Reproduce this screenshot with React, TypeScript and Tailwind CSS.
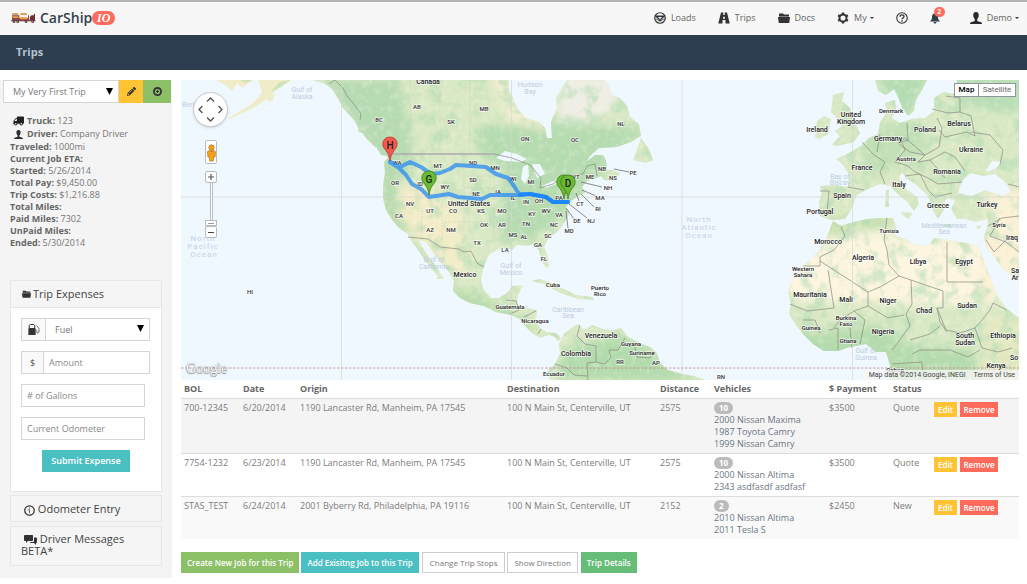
import { useState } from "react";
import type { ReactNode } from "react";
import {
  FaChevronDown,
  FaChevronLeft,
  FaChevronRight,
  FaChevronUp,
  FaPencilAlt,
  FaTruck,
} from "react-icons/fa";

type Job = {
  bol: string;
  date: string;
  origin: string;
  destination: string;
  distance: string;
  count: string;
  vehicles: string[];
  payment: string;
  status: string;
  rowClass: string;
};

const jobs: Job[] = [
  {
    bol: "700-12345",
    date: "6/20/2014",
    origin: "1190 Lancaster Rd, Manheim, PA 17545",
    destination: "100 N Main St, Centerville, UT",
    distance: "2575",
    count: "10",
    vehicles: ["2000 Nissan Maxima", "1987 Toyota Camry", "1999 Nissan Camry"],
    payment: "$3500",
    status: "Quote",
    rowClass: "bg-[#f4f4f4]",
  },
  {
    bol: "7754-1232",
    date: "6/23/2014",
    origin: "1190 Lancaster Rd, Manheim, PA 17545",
    destination: "100 N Main St, Centerville, UT",
    distance: "2575",
    count: "10",
    vehicles: ["2000 Nissan Altima", "2343 asdfasdf asdfasf"],
    payment: "$3500",
    status: "Quote",
    rowClass: "bg-white",
  },
  {
    bol: "STAS_TEST",
    date: "6/24/2014",
    origin: "2001 Byberry Rd, Philadelphia, PA 19116",
    destination: "100 N Main St, Centerville, UT",
    distance: "2152",
    count: "2",
    vehicles: ["2010 Nissan Altima", "2011 Tesla S"],
    payment: "$2450",
    status: "New",
    rowClass: "bg-[#f9f9f9]",
  },
];

const tripFacts = [
  ["Traveled:", "1000mi"],
  ["Current Job ETA:", ""],
  ["Started:", "5/26/2014"],
  ["Total Pay:", "$9,450.00"],
  ["Trip Costs:", "$1,216.88"],
  ["Total Miles:", ""],
  ["Paid Miles:", "7302"],
  ["UnPaid Miles:", ""],
  ["Ended:", "5/30/2014"],
];

const columns = [
  { title: "BOL", width: "w-[59px]" },
  { title: "Date", width: "w-[57px]" },
  { title: "Origin", width: "w-[207px]" },
  { title: "Destination", width: "w-[153px]" },
  { title: "Distance", width: "w-[54px]" },
  { title: "Vehicles", width: "w-[115px]" },
  { title: "$ Payment", width: "w-[64px]" },
  { title: "Status", width: "w-[41px]" },
];

/* icons */

const WheelIC = () => (
  <svg viewBox="0 0 24 24" className="w-3 h-3" fill="none" stroke="#333" strokeWidth="2.4">
    <circle cx="12" cy="12" r="10.500" />
    <path d="M4 8.500h16L14 14v3h-4v-3z" strokeWidth="2.600" />
    <path d="M3 13l5 3M21 13l-5 3" strokeWidth="1.500" />
  </svg>
);

const RoadIC = () => (
  <svg viewBox="0 0 24 24" className="w-3 h-3" fill="#333">
    <path d="M6 1h4.500v5h3V1H18l5.500 22h-8.500v-7h-6v7H.5zM10.500 9.500l-.6 4h4.200l-.6-4z" />
  </svg>
);

const FolderIC = ({ className }: { className: string }) => (
  <svg viewBox="0 0 24 20" className={className} fill="#333">
    <path d="M2 1h8l2 2h10v3H2zM0 8h24l-1.500 12h-21z" />
    <path d="M2 5h20v4H2z" opacity="0.6" />
  </svg>
);

const GearIC = () => (
  <svg viewBox="0 0 24 24" className="w-3 h-3" fill="none" stroke="#333">
    <circle cx="12" cy="12" r="7" strokeWidth="3.800" />
    <path
      d="M12 .8v4M12 19.200v4M2.300 6.400l3.500 2M18.200 15.600l3.500 2M2.300 17.600l3.500-2M18.200 8.400l3.500-2"
      strokeWidth="4.600"
    />
  </svg>
);

const HelpIC = () => (
  <svg viewBox="0 0 24 24" className="w-3 h-3" fill="none" stroke="#333" strokeWidth="2.2">
    <circle cx="12" cy="12" r="10.500" />
    <path d="M8 9.500c0-5 8-5 8-.5 0 3-4 2.500-4 5.500M12 16.500v3" strokeWidth="2.600" />
  </svg>
);

const BellIC = () => (
  <svg viewBox="0 0 20 22" className="w-[10px] h-[11px]" fill="#333f4d">
    <path d="M10 1c5 0 6 4 6 8 0 4 2 5 4 8H0c2-3 4-4 4-8 0-4 1-8 6-8zM7 18h6c0 4-6 4-6 0z" />
  </svg>
);

const PersonIC = ({ className }: { className: string }) => (
  <svg viewBox="0 0 24 24" className={className} fill="#2b2b2b">
    <path d="M12 0c4.500 0 5.500 3 5.500 7 0 3-1.500 5.500-3 7v4l7.500 2.500c1.500.5 2 1.500 2 3.500H0c0-2 .5-3 2-3.500L9.500 18v-4c-1.500-1.500-3-4-3-7 0-4 1-7 5.500-7z" />
  </svg>
);

const PlusIC = () => (
  <svg viewBox="0 0 24 24" className="w-[9px] h-[9px]" fill="none" stroke="#333" strokeWidth="5">
    <circle cx="12" cy="12" r="9.500" />
    <path d="M12 8v8M8 12h8" strokeWidth="3" />
  </svg>
);

const PumpIC = () => (
  <svg viewBox="0 0 24 22" className="w-3 h-[11px]" fill="none" stroke="#333" strokeWidth="2">
    <path d="M1 21h14M2.500 20V4c0-2 1-3 2.500-3h6c1.500 0 2.500 1 2.500 3v16" />
    <path d="M2 9h12v12H2z" fill="#333" />
    <path d="M14 12c6-1 2 6 5 6s3-3 3-7c0-3-1-4-5-8" stroke="#666" />
  </svg>
);

const InfoIC = () => (
  <svg viewBox="0 0 24 24" className="w-[11px] h-[11px] inline" fill="none" stroke="#333">
    <circle cx="12" cy="12" r="10.300" strokeWidth="2.800" />
    <path d="M12 10v8M8 11l4-1M12 5v3" strokeWidth="2" stroke="#666" />
  </svg>
);

const ChatIC = () => (
  <svg viewBox="0 0 26 20" className="w-[13px] h-[10px] inline" fill="#333">
    <path d="M2 0h14c2 0 2 1 2 2v8c0 1-1 2-2 2H8l-4 4v-4H2c-1 0-2-1-2-2V2c0-1 1-2 2-2z" />
    <path d="M20 5h3c2 0 3 1 3 2v7c0 1-1 2-2 2v4l-4-4h-6l-3-2h6c2 0 3-1 3-3z" />
  </svg>
);

const LogoIC = () => (
  <svg viewBox="0 0 75 36" className="w-[25px] h-3">
    <path d="M3 10h22v9h26v-9h3v16H3z" fill="#8a4a45" />
    <path d="M5 3h15l3 6H3zM30 3h15l4 6H27z" fill="#d9a05a" />
    <path d="M4 13h18v5H4zM28 15h20v7H28z" fill="#f0a050" />
    <path d="M56 24c0-10 3-14 8-14h5v-5h3v21H56zM60 15h5v5h-6z" fill="#6e2f33" />
    <path d="M1 24h72v4H1z" fill="#7b4a4c" />
    <g fill="#5a2b2e">
      <circle cx="9" cy="29" r="4" />
      <circle cx="20" cy="29" r="4" />
      <circle cx="45" cy="29" r="4" />
      <circle cx="65" cy="29" r="4" />
    </g>
    <g fill="#e6dcdc">
      <circle cx="9" cy="29" r="1.500" />
      <circle cx="20" cy="29" r="1.500" />
      <circle cx="45" cy="29" r="1.500" />
      <circle cx="65" cy="29" r="1.500" />
    </g>
  </svg>
);

const Caret = () => (
  <svg viewBox="0 0 8 4" className="w-1 h-[2px] shrink-0" fill="#333">
    <path d="M0 0h8L4 4z" />
  </svg>
);

const SelectArrow = ({ className }: { className: string }) => (
  <svg viewBox="0 0 8 8" className={`absolute w-[7px] h-[7px] pointer-events-none ${className}`}>
    <path d="M0 0h8L4 8z" fill="#000" />
  </svg>
);

/* map */

const NORTH_AMERICA =
  "M313 80 325 84 332 89 337 97 343 108 352 118 359 128 366 138 374 146 384 151 388 158 384 162 385 172 383 186 383 198 386 210 392 220 400 229 407 233 412 242 419 251 426 262 433 270 438 277 436 279 444 279 433 262 424 250 419 240 426 242 434 254 442 264 449 272 454 281 453 291 460 298 470 303 484 306 496 312 511 315 520 319 526 327 532 333 540 338 549 335 555 337 558 342 561 338 556 333 546 332 540 328 536 321 537 310 522 307 517 304 518 296 523 285 512 286 507 293 499 298 491 298 484 290 481 281 483 270 485 263 490 254 498 249 505 248 512 250 517 245 526 246 533 244 539 250 541 259 546 268 549 266 548 256 544 247 548 239 558 231 565 222 569 214 566 207 571 201 578 196 585 193 582 187 587 181 594 179 601 176 604 180 610 181 620 174 613 170 607 170 606 161 603 155 595 155 586 162 590 156 599 148 617 147 631 142 641 136 639 124 630 117 627 106 620 98 612 95 609 86 605 80H567L562 88 556 98 557 108 551 122 552 138 547 138 545 128 539 122 526 118 518 110 513 98 509 90 509 80Z";

const SOUTH_AMERICA =
  "M550 380 548 371 555 364 560 354 559 344 564 334 571 328 578 324 584 330 592 325 603 329 613 330 621 328 628 337 640 343 650 347 657 353 660 363 668 370 682 374 694 376 705 380Z";

const AFRICA =
  "M833 221 841 226 854 222 867 219 879 218 893 218 896 226 894 235 905 239 916 245 928 246 934 238 949 240 966 243 978 246 983 259 990 277 997 295 1006 308 1019 318V380H889L890 365 886 352 876 352 866 344 850 347 838 351 824 351 813 344 803 334 795 324 789 314 791 303 788 291 794 277 803 266 812 258 821 248 827 237Z";

const EURASIA =
  "M957 80H1019V280L1012 275 1002 268 994 256 987 248 984 238 987 226 988 219 976 222 966 219 957 219 951 209 955 201 948 198 943 203 944 210 938 219 933 211 930 200 926 194 915 184 906 178 902 172 899 178 905 188 917 197 919 204 914 211 908 203 899 195 890 186 880 184 866 190 857 195 851 210 845 219 831 220 820 216 819 202 822 192 820 186 835 185 848 187 849 174 842 164 836 159 847 154 861 146 869 138 878 134 880 122 887 112 885 103 895 100 896 110 892 118 900 123 912 119 925 118 934 111 934 98 943 92 955 94Z";

const ISLANDS = [
  "M833 95 844 92 842 101 850 108 855 123 860 133 854 142 838 146 832 145 840 136 835 131 842 126 837 118 831 112Z",
  "M815 137 817 121 824 116 831 119 828 134 819 139Z",
  "M633 160 637 150 641 138 649 149 653 160 646 163Z",
  "M532 281 540 279 552 283 566 290 576 295 592 297 594 300 578 299 560 293 544 284Z",
  "M377 148 387 151 390 156 381 155Z",
  "M886 190 889 190 889 207 885 207Z",
  "M901 212 912 213 909 219 902 215Z",
  "M942 225 951 224 950 227 943 227Z",
  "M975 227 982 225 979 229Z",
  "M875 80 878 91 886 95 894 89 898 97 903 109 908 116 914 111 916 100 922 90 927 80Z",
  "M340 80H350L353 91 346 98 340 89Z",
  "M350 100 354 98 356 110 351 109ZM355 116 360 119 364 133 359 132Z",
  "M1011 347 1019 343V372L1008 378Z",
];

const ALASKA = [
  "M216 80H254L247 84 243 88 237 83 232 91 227 86Z",
  "M258 80H292L282 86 274 92 267 99 258 105 247 111 236 116 228 120 230 117 240 111 249 106 257 99 262 92Z",
  "M268 96 275 94 273 100 267 102ZM213 123 218 122 214 125Z",
];

const LAKES = [
  "M496 158 505 151 517 154 527 159 521 162 505 161Z",
  "M523 167 528 164 529 176 525 184 521 179Z",
  "M532 164 540 164 545 174 537 178Z",
  "M542 186 553 181 559 183 546 188ZM554 180 564 176 567 178 558 181Z",
  "M958 193 962 181 970 173 984 176 995 174 1006 183 1011 192 1002 196 985 190 972 196Z",
  "M992 161 1002 162 995 169 985 172Z",
];

const BORDERS =
  "M329 84 335 80 343 88 347 96 353 103 361 114 360 120M392 154H494L512 158 530 165 541 178 540 188 553 184 566 176 583 174 587 166 595 164 597 176M408 237 428 239 440 247 459 249 464 252 471 251 477 263 484 267M506 300 516 301 519 310 510 314M524 317 536 311M541 329 538 334M580 325 577 336 585 344 596 346 596 362 587 363 588 380M596 362 604 364 611 358 609 350 618 350 625 338M634 342 637 357 650 358 655 352M555 364 567 368 574 375 587 376M841 227 845 236 834 250 820 257V266H803M820 261 868 292 880 287 899 276 889 265 887 250 884 240 887 218M947 242V282H983M899 276 911 280 943 291V308H937L940 322 947 332M911 280 912 304 906 314 910 326 899 341 892 350M868 292 868 306 854 311 840 320 834 328M854 311 865 320 860 344M828 270 834 308 807 311 790 304M803 320 815 320 820 333M829 330 838 328 838 350M850 328 852 348M868 306 888 318 904 315M910 340 930 334 940 326M912 354 920 350 950 350 968 357 980 350M937 308 946 330 960 333 975 328 982 320 990 310 993 303 1007 310M975 328 982 348 998 352 1012 348M892 364 922 362 923 380M820 191H829L827 213M848 187 864 190M862 142 874 155 885 162 880 172 885 184M880 134 877 152M900 138 905 150 895 162 908 166M907 123 908 140 898 143 910 152 925 155 939 147 942 128 937 118M898 143 905 138 925 155 918 162 930 160 945 152 955 157M939 130 945 137 967 132 975 136 971 116 960 112 960 98 946 96M932 109 948 113 960 112M908 166 915 172 928 178 938 184 962 182M930 160 945 178M905 176 920 174 928 190 935 197 952 193M955 157 965 171M971 132 990 135 1003 150 1000 165M1008 184 1019 187M988 226 1002 218 1019 216M1000 218 990 236 1006 242 1019 252M986 240 994 252 1006 240";

const shapes = (paths: string[]) => paths.map((d) => <path key={d} d={d} />);

// x, y, text — y is the baseline
type Place = [number, number, string];

const states: Place[] = [
  [379, 122, "BC"], [417, 109, "AB"], [451, 124, "SK"], [484, 111, "MB"], [525, 141, "ON"],
  [575, 142, "QC"], [621, 126, "NL"], [397, 165, "WA"], [395, 185, "OR"], [420, 186, "ID"],
  [438, 168, "MT"], [473, 165, "ND"], [495, 170, "MN"], [473, 182, "SD"], [445, 189, "WY"],
  [476, 196, "NE"], [498, 194, "IA"], [513, 181, "WI"], [531, 184, "MI"], [410, 206, "NV"],
  [399, 218, "CA"], [430, 213, "UT"], [453, 213, "CO"], [481, 213, "KS"], [502, 213, "MO"],
  [526, 204, "IN"], [513, 200, "IL"], [539, 203, "OH"], [559, 200, "PA"], [532, 216, "KY"], [546, 213, "WV"],
  [559, 217, "VA"], [526, 226, "TN"], [554, 227, "NC"], [430, 232, "AZ"], [451, 232, "NM"],
  [484, 227, "OK"], [502, 227, "AR"], [477, 245, "TX"], [513, 237, "MS"], [524, 239, "AL"],
  [548, 238, "SC"], [538, 247, "GA"], [505, 252, "LA"], [544, 261, "FL"], [576, 179, "VT"],
  [590, 179, "ME"], [602, 171, "NB"], [613, 180, "NS"], [633, 175, "PE"], [608, 190, "NH"],
  [600, 200, "MA"], [598, 211, "RI"], [580, 206, "CT"], [591, 223, "NJ"], [577, 223, "DE"],
  [569, 233, "MD"], [250, 294, "HI"], [620, 364, "RR"], [656, 365, "AP"], [721, 379, "RN"],
];

const countries: Place[] = [
  [428, 84, "Canada"], [469, 206, "United States"], [465, 277, "Mexico"], [601, 338, "Venezuela"],
  [576, 356, "Colombia"], [817, 132, "Ireland"], [851, 117, "United"], [851, 124, "Kingdom"],
  [925, 132, "Poland"], [959, 126, "Belarus"], [888, 141, "Germany"], [971, 152, "Ukraine"],
  [862, 170, "France"], [947, 174, "Romania"], [899, 187, "Italy"], [842, 198, "Spain"],
  [820, 214, "Portugal"], [938, 208, "Greece"], [987, 207, "Turkey"], [828, 244, "Morocco"],
  [863, 260, "Algeria"], [918, 264, "Libya"], [964, 264, "Egypt"], [810, 297, "Mauritania"],
  [846, 302, "Mali"], [888, 303, "Niger"], [924, 313, "Chad"], [967, 308, "Sudan"],
  [883, 334, "Nigeria"], [965, 338, "South"], [965, 345, "Sudan"], [1003, 338, "Ethiopia"],
  [996, 368, "Kenya"], [1012, 240, "Iraq"], [1015, 273, "Sa"], [1015, 280, "Ar"], [1014, 360, "So"],
];

const smallCountries: Place[] = [
  [891, 113, "Denmark"], [906, 161, "Austria"], [889, 233, "Tunisia"], [999, 227, "Syria"],
  [803, 271, "Western"], [803, 277, "Sahara"], [846, 320, "Burkina"], [846, 326, "Faso"],
  [811, 330, "Guinea"], [848, 343, "Ghana"], [553, 287, "Cuba"], [600, 290, "Puerto"],
  [600, 296, "Rico"], [510, 309, "Guatemala"], [535, 323, "Nicaragua"], [631, 346, "Guyana"],
  [642, 355, "Suriname"], [554, 376, "Ecuador"], [895, 372, "Gabon"],
];

const waters: Place[] = [
  [302, 92, "Gulf of"], [302, 99, "Alaska"], [192, 107, "Bering"], [530, 87, "Hudson"],
  [530, 94, "Bay"], [434, 262, "Gulf of"], [434, 269, "California"], [511, 268, "Gulf of"],
  [511, 275, "Mexico"], [568, 312, "Caribbean"], [568, 318, "Sea"], [840, 179, "Bay of"],
  [840, 185, "Biscay"], [944, 228, "Mediterranean"], [944, 234, "Sea"], [866, 353, "Gulf of"],
  [866, 360, "Guinea"],
];

const oceans: Place[] = [
  [203, 241, "North"], [203, 249, "Pacific"], [204, 257, "Ocean"],
  [699, 222, "North"], [699, 230, "Atlantic"], [699, 238, "Ocean"],
];

const placeTexts = (places: Place[]) =>
  places.map(([x, y, name]) => (
    <text key={`${name}${x}${y}`} x={x} y={y}>
      {name}
    </text>
  ));

const Pin = ({ x, y, letter, color, edge }: { x: number; y: number; letter: string; color: string; edge: string }) => (
  <g transform={`translate(${x} ${y})`}>
    <path
      d="M0 0C-1-7-3-9-6-13-9-18-6-24 0-24S9-18 6-13C3-9 1-7 0 0Z"
      fill={color}
      stroke={edge}
      strokeWidth="0.8"
    />
    <text y="-12" textAnchor="middle" fontSize="10" fontWeight="500" fill="#222">
      {letter}
    </text>
  </g>
);

const TripMap = () => (
  <svg
    viewBox="181 80 838 300"
    preserveAspectRatio="xMidYMid slice"
    className="block w-full h-[300px] bg-[#eff7ff] font-[Roboto,sans-serif]"
    role="img"
    aria-label="Trip route map"
  >
    <defs>
      <clipPath id="land">
        {shapes([NORTH_AMERICA, SOUTH_AMERICA, AFRICA, EURASIA, ...ISLANDS])}
      </clipPath>
      <filter id="soft" x="-30%" y="-30%" width="160%" height="160%">
        <feGaussianBlur stdDeviation="5" />
      </filter>
      <filter id="terrain" x="0" y="0" width="100%" height="100%">
        <feTurbulence type="fractalNoise" baseFrequency="0.07" numOctaves="5" seed="8" />
        <feColorMatrix values="0 0 0 0 0.46  0 0 0 0 0.72  0 0 0 0 0.46  0 4 0 0 -1.9" />
      </filter>
      <filter id="relief" x="0" y="0" width="100%" height="100%">
        <feTurbulence type="fractalNoise" baseFrequency="0.16" numOctaves="3" seed="3" />
        <feColorMatrix values="0 0 0 0 1  0 0 0 0 0.98  0 0 0 0 0.86  4 0 0 0 -2" />
      </filter>
    </defs>

    <g fill="#f1ecc8">{shapes(ALASKA)}</g>
    <path d="M240 80H252L246 83ZM270 92 280 82 290 80 281 87Z" fill="#cfe3b8" />
    <g clipPath="url(#land)">
      <rect x="181" y="80" width="838" height="300" fill="#dae9c5" />
      <g filter="url(#soft)">
        <path d="M325 80 400 80 415 165 400 180 384 175 370 150Z" fill="#b7dab3" />
        <path d="M480 125 540 125 600 145 640 130 600 180 560 220 530 240 500 240 505 170 480 155Z" fill="#b6dbb0" />
        <path d="M540 115 570 125 610 125 650 130 620 150 560 160Z" fill="#b6dbb0" />
        <path d="M383 165 395 170 395 200 412 235 400 235 380 205Z" fill="#b5d9ab" />
        <path d="M400 185 430 188 440 204 460 204 470 270 450 275 425 245 400 220Z" fill="#f3ecc8" />
        <path d="M490 75H510L525 115 550 122 545 130 510 122Z" fill="#f4efd2" />
        <path d="M555 75H620L615 108 590 122 560 120Z" fill="#efeee4" />
        <path d="M450 285 490 300 540 330 520 330 455 300Z" fill="#b9dcaa" />
        <path d="M560 350 620 335 700 380H560Z" fill="#b2dbac" />
        <path d="M875 75H930L905 120Z" fill="#b4dcb2" />
        <path d="M940 75H1025V115L960 105Z" fill="#b9deb6" />
        <path d="M855 130 920 120 930 150 870 180Z" fill="#c3e0b6" />
        <path d="M780 240 860 232 960 240 1025 240V300L960 305 780 300Z" fill="#fdf5df" />
        <path d="M990 190H1025V300H980Z" fill="#fbf1d6" />
        <path d="M825 220 890 216 890 224 850 230 826 240Z" fill="#c3deaa" />
        <path d="M790 335 880 325 910 345 975 350V385H800Z" fill="#b5dbac" />
        <path d="M985 315 1025 320V385H985Z" fill="#e4e9c1" />
      </g>
      <path d="M181 80H650V380H181ZM800 80H1019V225H800ZM780 312H1019V380H780Z" opacity="0.6" filter="url(#terrain)" />
      <rect x="181" y="80" width="838" height="300" opacity="0.2" filter="url(#relief)" />
    </g>
    <g fill="#eff7ff">{shapes(LAKES)}</g>

    <path
      d="M410 80V154M440 80V154M470 80V154M430 160V204M464 165V240M410 190H460M464 176H490M464 188H494M422 204V240M442 204V240M442 222H500M494 165V240M508 190V245M520 195V240M533 215V240M508 222H560"
      stroke="#b9c4ac"
      strokeWidth="0.5"
      strokeDasharray="2 1"
      opacity="0.7"
      fill="none"
    />
    <path d={BORDERS} fill="none" stroke="#88897f" strokeWidth="0.7" />
    <path d="M392 154H493" stroke="#b5b5b5" strokeWidth="1.500" />
    <path d="M181 197H1019M341.500 80V380M511.500 80V380M682 80V380M852.500 80V380" stroke="#d3d5d0" strokeWidth="0.8" opacity="0.8" />
    <path d="M181 368H1019" stroke="#c98f92" strokeWidth="0.9" strokeDasharray="2.500 1.500" />
    <path
      d="M614 169 629 172M581 182 602 187M582 190 596 196M581 194 594 207M576 193 579 201M569 204 587 218M566 208 574 219M566 211 568 228"
      stroke="#444"
      strokeWidth="0.6"
    />

    <g textAnchor="middle">
      <g fontSize="8" fill="#c5d3e4" letterSpacing="1">
        {placeTexts(oceans)}
      </g>
      <g fontSize="7" fill="#bccde0">
        {placeTexts(waters)}
      </g>
      <g
        stroke="#fff"
        strokeOpacity="0.7"
        strokeWidth="1.500"
        paintOrder="stroke"
        fontWeight="500"
        fill="#333"
      >
        <g fontSize="6">{placeTexts(states)}</g>
        <g fontSize="6" fill="#222">
          {placeTexts(smallCountries)}
        </g>
        <g fontSize="7" fill="#222">
          {placeTexts(countries)}
        </g>
      </g>
    </g>

    <g fill="none" stroke="#2a8cf4" strokeWidth="4" strokeLinejoin="round" strokeLinecap="round" opacity="0.75">
      <path d="M390 162 400 167 410 162 421 167 431 174 440 173 450 169 456 165 486 167 496 174 508 178 514 186 519 194 530 194 546 197 553 202 568 202" />
      <path d="M390 162 399 168 406 175 412 184 421 189 429 197 449 194 458 197 482 199 490 195 520 195" />
    </g>
    <path
      d="M520 195 530 194 546 197 553 202 568 202"
      fill="none"
      stroke="#1e88fa"
      strokeWidth="4"
      strokeLinejoin="round"
      strokeLinecap="round"
    />
    <Pin x={390} y={161} letter="H" color="#f4594e" edge="#b5362d" />
    <Pin x={429} y={195} letter="G" color="#6aba33" edge="#3d7a17" />
    <Pin x={564} y={199} letter="C" color="#6aba33" edge="#3d7a17" />
    <Pin x={568} y={199} letter="D" color="#6aba33" edge="#3d7a17" />
  </svg>
);

const MapControls = () => (
  <>
    <div className="absolute top-3 left-3 w-[35px] h-[35px] rounded-full bg-white border border-[#c5c9cf] shadow-sm grid grid-cols-3 grid-rows-3 place-items-center p-[2px] text-[9px] text-[#555]">
      <button type="button" aria-label="Pan up" className="col-start-2">
        <FaChevronUp />
      </button>
      <button type="button" aria-label="Pan left" className="col-start-1 row-start-2">
        <FaChevronLeft />
      </button>
      <button type="button" aria-label="Pan right" className="col-start-3 row-start-2">
        <FaChevronRight />
      </button>
      <button type="button" aria-label="Pan down" className="col-start-2 row-start-3">
        <FaChevronDown />
      </button>
    </div>
    <div className="absolute top-[60px] left-6 flex flex-col items-center">
      <button
        type="button"
        aria-label="Street view"
        className="w-3 h-6 bg-white border border-[#b8bcc2] rounded-[2px] grid place-items-center"
      >
        <svg viewBox="0 0 10 20" className="w-[9px] h-[19px]" fill="#f2a31b" stroke="#b5700d" strokeWidth="0.7">
          <path d="M2 8h6l1.500 1-.5 6H7.500L7 19.500H3L2.500 15H1L.5 9z" />
          <circle cx="5" cy="4.500" r="3" />
          <path d="M3.500 8h3L5 10z" fill="#e2574c" stroke="none" />
        </svg>
      </button>
      <button
        type="button"
        aria-label="Zoom in"
        className="mt-[7px] w-3 h-3 bg-white border border-[#b8bcc2] rounded-[2px] grid place-items-center"
      >
        <svg viewBox="0 0 6 6" className="w-[6px] h-[6px]" stroke="#555" strokeWidth="1.200">
          <path d="M3 0v6M0 3h6" />
        </svg>
      </button>
      <div className="w-[3px] h-[37px] bg-white border-x border-[#b8bcc2]" />
      <div className="w-3 h-[6px] bg-white border border-[#b8bcc2] grid place-items-center">
        <div className="w-[6px] h-px bg-[#999]" />
      </div>
      <button
        type="button"
        aria-label="Zoom out"
        className="w-3 h-3 bg-white border border-[#b8bcc2] rounded-[2px] grid place-items-center"
      >
        <div className="w-[6px] h-px bg-[#444]" />
      </button>
    </div>
    <div className="absolute top-[3px] right-[3px] flex h-[14px] border border-[#8f949b] bg-white font-[Roboto,sans-serif] text-[8px] leading-3">
      <button type="button" className="w-6 font-medium text-black border-r border-[#8f949b]">
        Map
      </button>
      <button type="button" className="w-9 text-[#666]">
        Satellite
      </button>
    </div>
    <span className="absolute left-[5px] bottom-px font-['Liberation_Serif',serif] text-[14px] leading-5 text-white [text-shadow:0_0_1px_#666,0_1px_1px_#888]">
      Google
    </span>
    <div className="absolute right-0 bottom-0 flex gap-2 h-[10px] px-1 bg-[#f5f5f5]/80 font-[Roboto,sans-serif] text-[7px] leading-[10px] text-[#444]">
      <span>Map data ©2014 Google, INEGI</span>
      <a href="#terms">Terms of Use</a>
    </div>
  </>
);

/* page parts */

const NavLink = ({ icon, label, caret }: { icon: ReactNode; label: string; caret?: boolean }) => (
  <a href={`#${label.toLowerCase()}`} className="flex items-center gap-[5px]">
    {icon}
    <span className="flex items-center gap-[3px]">
      {label}
      {caret && <Caret />}
    </span>
  </a>
);

const Header = () => (
  <header>
    <div className="h-[35px] border-t-2 border-[#b4b4b4] bg-[#f7f7f7] pl-[11px] pr-2 pb-px flex items-center justify-between">
      <a href="#home" className="flex items-center">
        <LogoIC />
        <span className="ml-1 text-[14px] leading-5 font-semibold text-[#333f4d]">CarShip</span>
        <span className="w-[23px] h-[14px] rounded-full bg-[#fe6b5b] text-white text-center font-['Liberation_Serif',serif] italic font-bold text-[12px] leading-[14px]">
          IO
        </span>
      </a>
      <nav className="flex items-center gap-[22px] text-[9px] leading-3 text-[#666]">
        <NavLink icon={<WheelIC />} label="Loads" />
        <NavLink icon={<RoadIC />} label="Trips" />
        <NavLink icon={<FolderIC className="w-3 h-[10px]" />} label="Docs" />
        <NavLink icon={<GearIC />} label="My" caret />
        <a href="#help" aria-label="Help">
          <HelpIC />
        </a>
        <a href="#alerts" aria-label="Alerts" className="relative">
          <BellIC />
          <span className="absolute left-1 -top-[6px] w-[11px] h-[10px] rounded-[5px] bg-[#fe6b5b] text-white text-center text-[7px] leading-[10px] font-bold">
            2
          </span>
        </a>
        <span className="ml-2">
          <NavLink icon={<PersonIC className="w-3 h-3" />} label="Demo" caret />
        </span>
      </nav>
    </div>
    <div className="h-[35px] bg-[#2e3d4f] px-4 pb-px flex items-center">
      <h1 className="text-[11px] leading-4 font-bold text-[#b4c2d1]">Trips</h1>
    </div>
  </header>
);

const fieldClass =
  "block h-[23px] bg-white border border-[#d5d5d5] px-[5px] text-[9px] text-[#777] placeholder:text-[#888] outline-none";

const TripExpenses = () => {
  const [expense, setExpense] = useState("Fuel");

  return (
    <section className="border border-[#e7e7e7] bg-white">
      <h2 className="h-[27px] px-[11px] bg-[#f5f5f5] border-b border-[#e7e7e7] flex items-center gap-[2px] text-[11px] leading-3 text-[#444]">
        <FolderIC className="w-[9px] h-2" />
        Trip Expenses
      </h2>
      <form className="px-[10px] pt-[10px] pb-[19px]" onSubmit={(e) => e.preventDefault()}>
        <div className="flex mr-px">
          <label
            htmlFor="expense"
            aria-label="Expense type"
            className="w-6 border border-r-0 border-[#d5d5d5] bg-[#f9f9f9] grid place-items-center"
          >
            <PumpIC />
          </label>
          <div className="relative flex-1">
            <select
              id="expense"
              value={expense}
              onChange={(e) => setExpense(e.target.value)}
              className="block w-full h-[23px] appearance-none bg-white border border-[#d5d5d5] pl-[9px] pt-px text-[9px] text-[#777] outline-none"
            >
              <option>Fuel</option>
              <option>Repairs</option>
              <option>Tolls</option>
            </select>
            <SelectArrow className="right-[6px] top-[7px]" />
          </div>
        </div>
        <div className="flex mr-px mt-[10px]">
          <label
            htmlFor="amount"
            className="w-[22px] border border-r-0 border-[#d5d5d5] bg-[#f9f9f9] grid place-items-center text-[9px] text-[#555]"
          >
            $
          </label>
          <input id="amount" type="text" placeholder="Amount" className={`${fieldClass} flex-1 min-w-0`} />
        </div>
        <div className="mr-[6px]">
          <input
            type="text"
            aria-label="Number of gallons"
            placeholder="# of Gallons"
            className={`${fieldClass} w-full mt-[10px]`}
          />
          <input
            type="text"
            aria-label="Current odometer"
            placeholder="Current Odometer"
            className={`${fieldClass} w-full mt-[10px]`}
          />
        </div>
        <button
          type="submit"
          className="block mx-auto mt-[10px] w-[88px] h-[22px] bg-[#4bc0c3] text-white text-[9px] font-semibold"
        >
          Submit Expense
        </button>
      </form>
    </section>
  );
};

const Sidebar = () => {
  const [trip, setTrip] = useState("My Very First Trip");

  return (
    <aside className="w-[172px] shrink-0 bg-[#f4f4f4] pb-3">
      <div className="flex pl-[3px] pr-px">
        <div className="relative flex-1">
          <select
            aria-label="Trip"
            value={trip}
            onChange={(e) => setTrip(e.target.value)}
            className="block w-full h-[23px] appearance-none bg-white border border-[#d5d5d5] pl-[9px] pt-px text-[9px] text-[#777] outline-none"
          >
            <option>My Very First Trip</option>
          </select>
          <SelectArrow className="right-[6px] top-2" />
        </div>
        <button type="button" aria-label="Edit trip" className="w-6 h-[23px] bg-[#ffc334] grid place-items-center">
          <FaPencilAlt className="text-[9px] text-[#333]" />
        </button>
        <button type="button" aria-label="Add trip" className="w-7 h-[23px] bg-[#8cc067] grid place-items-center">
          <PlusIC />
        </button>
      </div>

      <ul className="mt-3 ml-[10px] text-[9px] leading-3 text-[#777]">
        <li className="flex items-center gap-[3px] pl-[3px]">
          <FaTruck className="w-[11px] h-[10px] text-[#222] -scale-x-100" />
          <span>
            <b className="text-[#666]">Truck:</b> 123
          </span>
        </li>
        <li className="flex items-center gap-1 pl-1 mt-px mb-px">
          <PersonIC className="w-[9px] h-[9px]" />
          <span>
            <b className="text-[#666]">Driver:</b> Company Driver
          </span>
        </li>
        {tripFacts.map(([label, value]) => (
          <li key={label}>
            <b className="text-[#666]">{label}</b> {value}
          </li>
        ))}
      </ul>

      <div className="mt-[31px] ml-[10px] mr-[10px]">
        <TripExpenses />
        <section className="mt-[3px] h-[27px] border border-[#e7e7e7] bg-[#f5f5f5] px-[13px]">
          <h2 className="text-[11px] leading-[26px] text-[#444]">
            <InfoIC /> Odometer Entry
          </h2>
        </section>
        <section className="mt-1 border border-[#e7e7e7] bg-[#f5f5f5] px-[10px] pt-[6px] pb-2">
          <h2 className="text-[11px] leading-3 text-[#444] indent-[3px]">
            <ChatIC /> Driver Messages BETA*
          </h2>
        </section>
      </div>
    </aside>
  );
};

const JobsTable = () => (
  <table className="w-full table-fixed text-left text-[9px] leading-3 text-[#7c7c7c]">
    <thead>
      <tr>
        {columns.map((column) => (
          <th key={column.title} className={`${column.width} p-[3px] font-bold text-[#666] whitespace-nowrap`}>
            {column.title}
          </th>
        ))}
        <th aria-label="Actions" />
      </tr>
    </thead>
    <tbody>
      {jobs.map((job) => (
        <tr key={job.bol} className={`${job.rowClass} border-t border-[#ddd] align-top`}>
          <td className="p-[3px]">{job.bol}</td>
          <td className="p-[3px]">{job.date}</td>
          <td className="p-[3px]">{job.origin}</td>
          <td className="p-[3px]">{job.destination}</td>
          <td className="p-[3px]">{job.distance}</td>
          <td className="p-[3px] text-[#6b7683]">
            <span className="block w-fit h-3 px-[5px] rounded-full bg-[#bbb] text-white text-[8px] font-bold">
              {job.count}
            </span>
            {job.vehicles.map((vehicle) => (
              <div key={vehicle}>{vehicle}</div>
            ))}
          </td>
          <td className="p-[3px]">{job.payment}</td>
          <td className="p-[3px]">{job.status}</td>
          <td className="p-[3px]">
            <div className="flex gap-[3px]">
              <button type="button" className="w-[23px] h-[15px] bg-[#ffc334] text-white text-[8px] font-semibold">
                Edit
              </button>
              <button type="button" className="w-[38px] h-[15px] bg-[#fe6b5b] text-white text-[8px] font-semibold">
                Remove
              </button>
            </div>
          </td>
        </tr>
      ))}
    </tbody>
  </table>
);

const App = () => {
  return (
    <div className="min-h-screen bg-white font-['Open_Sans',sans-serif]">
      <Header />
      <div className="flex items-start pt-[10px]">
        <Sidebar />
        <main className="flex-1 min-w-0 pl-[9px] pr-2">
          <div className="relative overflow-hidden">
            <TripMap />
            <MapControls />
          </div>
          <JobsTable />
          <div className="mt-[13px] flex flex-wrap gap-[2px] text-[8px] leading-[21px] font-semibold text-white">
            <button type="button" className="h-[21px] px-[6px] bg-[#8cc067]">
              Create New Job for this Trip
            </button>
            <button type="button" className="h-[21px] px-[6px] bg-[#4bc0c3]">
              Add Exisitng Job to this Trip
            </button>
            <button
              type="button"
              className="ml-px h-[21px] px-[7px] leading-[19px] border border-[#ccc] bg-white font-normal text-[#777]"
            >
              Change Trip Stops
            </button>
            <button
              type="button"
              className="h-[21px] px-[6px] leading-[19px] border border-[#ccc] bg-white font-normal text-[#777]"
            >
              Show Direction
            </button>
            <button type="button" className="ml-px h-[21px] px-[6px] bg-[#66bd78]">
              Trip Details
            </button>
          </div>
        </main>
      </div>
    </div>
  );
};

export default App;
